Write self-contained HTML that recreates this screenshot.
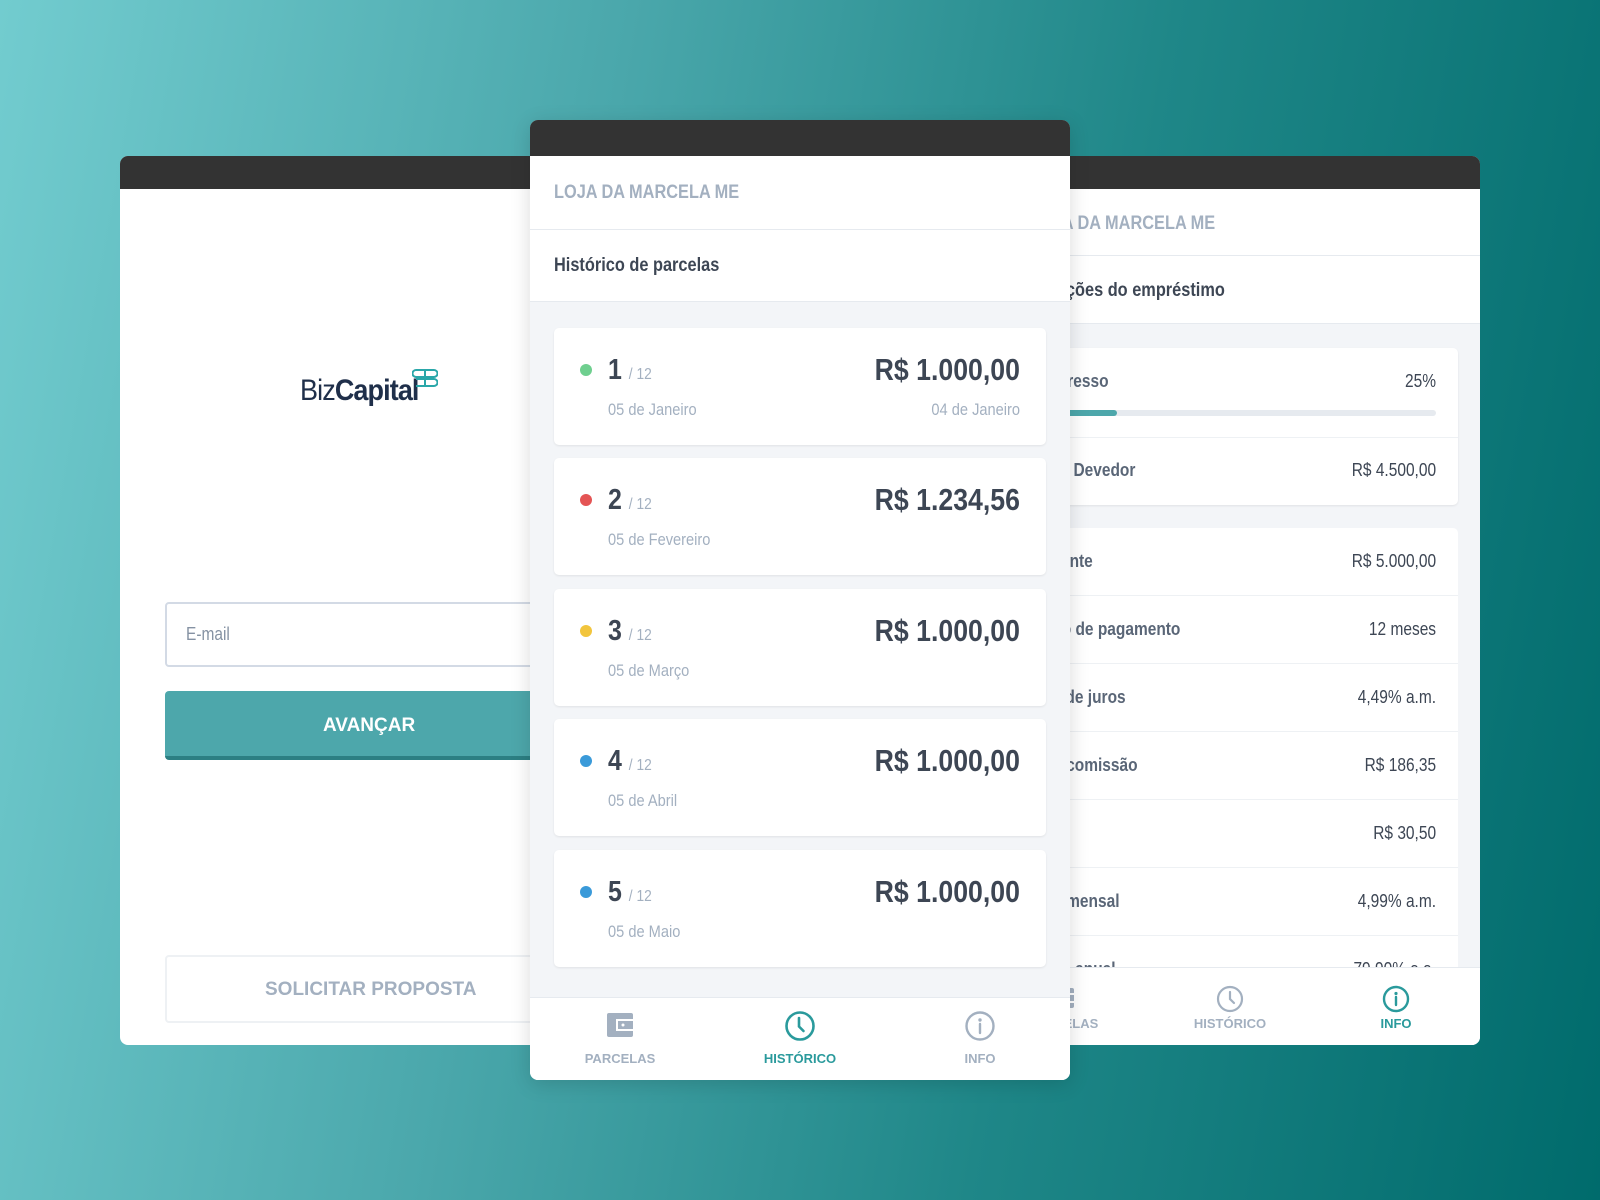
<!DOCTYPE html>
<html><head><meta charset="utf-8"><style>
*{box-sizing:border-box;margin:0;padding:0}
body{width:1600px;height:1200px;overflow:hidden;position:relative;font-family:"Liberation Sans",sans-serif;background:linear-gradient(100deg,#72cccf 0%,#4aa7ab 35%,#1f8788 65%,#006b6c 100%)}
.panel{position:absolute;background:#fff;border-radius:8px;overflow:hidden}
.bar{position:absolute;left:0;right:0;top:0;background:#333}
.n{display:inline-block;transform:scaleX(.86);transform-origin:left center;white-space:nowrap}
.nr{display:inline-block;transform:scaleX(.86);transform-origin:right center;white-space:nowrap}
.card{position:absolute;left:24px;width:492px;height:117px;background:#fff;border-radius:5px;box-shadow:0 1px 2px rgba(0,0,0,.08)}
.dot{position:absolute;left:26px;top:36px;width:12px;height:12px;border-radius:50%}
.num{position:absolute;left:54px;top:26px;font-size:29px;font-weight:bold;color:#3d4654}
.num small{font-size:16px;font-weight:normal;color:#a3b0c0}
.date{position:absolute;left:54px;top:72px;font-size:17px;color:#a3b0c0}
.amt{position:absolute;right:26px;top:24px;font-size:31px;font-weight:bold;color:#3d4654}
.d2{position:absolute;right:26px;top:72px;font-size:17px;color:#a3b0c0}
.row{position:absolute;left:0;right:0;height:68px;border-bottom:1px solid #eef1f4}
.row .l{position:absolute;left:22px;top:23px;font-size:18px;font-weight:bold;color:#5a6677}
.row .r{position:absolute;right:22px;top:23px;font-size:18px;color:#3d4654}
.lab{position:absolute;font-size:13px;font-weight:bold;text-align:center;width:120px}
</style></head><body>

<!-- left panel -->
<div class="panel" style="left:120px;top:156px;width:430px;height:889px">
  <div class="bar" style="height:33px"></div>
  <div style="position:absolute;left:180px;top:218px;font-size:30px;color:#1f2f4a;letter-spacing:-1px"><span class="n" style="transform:scaleX(.9)">Biz<b>Capital</b></span></div>
  <svg style="position:absolute;left:292px;top:212px" width="26" height="20" viewBox="0 0 26 20"><path d="M4 2h18a3.5 3.5 0 0 1 0 7H4a3.5 3.5 0 0 1 0-7zM4 11h18a3.5 3.5 0 0 1 0 7H4" fill="none" stroke="#2aa7a9" stroke-width="2" stroke-linejoin="round"/><path d="M13 2v16" stroke="#2aa7a9" stroke-width="2"/></svg>
  <div style="position:absolute;left:45px;top:446px;width:420px;height:65px;border:2px solid #d3dae5;border-radius:4px"></div>
  <div style="position:absolute;left:66px;top:468px;font-size:18px;color:#8592a3"><span class="n">E-mail</span></div>
  <div style="position:absolute;left:45px;top:535px;width:420px;height:69px;background:#4da7ab;border-bottom:4px solid #2c7f83;border-radius:4px"></div>
  <div style="position:absolute;left:203px;top:559px;font-size:19px;font-weight:bold;color:#fff">AVANÇAR</div>
  <div style="position:absolute;left:45px;top:799px;width:420px;height:68px;border:2px solid #eef1f4;border-radius:4px"></div>
  <div style="position:absolute;left:145px;top:823px;font-size:19px;font-weight:bold;color:#a3b0c0">SOLICITAR PROPOSTA</div>
</div>

<!-- right panel -->
<div class="panel" style="left:1010px;top:156px;width:470px;height:889px;background:#f3f5f8">
  <div class="bar" style="height:33px"></div>
  <div style="position:absolute;left:0;right:0;top:33px;height:135px;background:#fff"></div>
  <div style="position:absolute;left:0;right:0;top:99px;height:1px;background:#e6eaef"></div>
  <div style="position:absolute;left:0;right:0;top:167px;height:1px;background:#e6eaef"></div>
  <div style="position:absolute;left:20px;top:57px;font-size:19px;font-weight:bold;color:#a3b0c0"><span class="n">LOJA DA MARCELA ME</span></div>
  <div style="position:absolute;left:-4px;top:124px;font-size:19px;font-weight:bold;color:#3d4654"><span class="n">Informações do empréstimo</span></div>
  <div style="position:absolute;left:22px;right:22px;top:192px;height:157px;background:#fff;border-radius:5px;box-shadow:0 1px 2px rgba(0,0,0,.08)">
    <div style="position:absolute;left:0px;top:23px;font-size:18px;font-weight:bold;color:#5a6677"><span class="n">Progresso</span></div>
    <div style="position:absolute;right:22px;top:23px;font-size:18px;color:#3d4654"><span class="nr">25%</span></div>
    <div style="position:absolute;left:0;right:22px;top:62px;height:6px;background:#e6eaef;border-radius:3px"><div style="width:85px;height:6px;background:#4da7ab;border-radius:3px"></div></div>
    <div style="position:absolute;left:0;right:0;top:89px;height:1px;background:#eef1f4"></div>
    <div style="position:absolute;left:-5px;top:112px;font-size:18px;font-weight:bold;color:#5a6677"><span class="n">Saldo Devedor</span></div>
    <div style="position:absolute;right:22px;top:112px;font-size:18px;color:#3d4654"><span class="nr">R$ 4.500,00</span></div>
  </div>
  <div style="position:absolute;left:22px;right:22px;top:372px;height:480px;background:#fff;border-radius:5px">
    <div class="row" style="top:0"><div class="l" style="left:-8px"><span class="n">Montante</span></div><div class="r"><span class="nr">R$ 5.000,00</span></div></div>
    <div class="row" style="top:68px"><div class="l" style="left:-3px"><span class="n">Prazo de pagamento</span></div><div class="r"><span class="nr">12 meses</span></div></div>
    <div class="row" style="top:136px"><div class="l" style="left:-5px"><span class="n">Taxa de juros</span></div><div class="r"><span class="nr">4,49% a.m.</span></div></div>
    <div class="row" style="top:204px"><div class="l" style="left:-8px"><span class="n">Valor comissão</span></div><div class="r"><span class="nr">R$ 186,35</span></div></div>
    <div class="row" style="top:272px"><div class="l" style="left:0"><span class="n">IOF</span></div><div class="r"><span class="nr">R$ 30,50</span></div></div>
    <div class="row" style="top:340px"><div class="l" style="left:-14px"><span class="n">Custo mensal</span></div><div class="r"><span class="nr">4,99% a.m.</span></div></div>
    <div class="row" style="top:408px"><div class="l" style="left:-5px"><span class="n">Custo anual</span></div><div class="r"><span class="nr">79,90% a.a.</span></div></div>
  </div>
  <div style="position:absolute;left:0;right:0;top:811px;height:78px;background:#fff;border-top:1px solid #e6eaef">
    <svg style="position:absolute;left:40px;top:17px" width="26" height="26" viewBox="0 0 26 26"><rect x="2" y="3" width="22" height="20" rx="2" fill="#a3b0c0"/><rect x="10" y="8" width="14" height="10" fill="#fff"/><rect x="12" y="10" width="12" height="6" fill="#a3b0c0"/></svg>
    <div class="lab" style="left:-7px;top:48px;color:#a3b0c0">PARCELAS</div>
    <svg style="position:absolute;left:206px;top:17px" width="28" height="28" viewBox="0 0 28 28"><circle cx="14" cy="14" r="12" fill="none" stroke="#a3b0c0" stroke-width="2.2"/><path d="M14 7v7l4 4" fill="none" stroke="#a3b0c0" stroke-width="2.2" stroke-linecap="round"/></svg>
    <div class="lab" style="left:160px;top:48px;color:#a3b0c0">HISTÓRICO</div>
    <svg style="position:absolute;left:372px;top:17px" width="28" height="28" viewBox="0 0 28 28"><circle cx="14" cy="14" r="12" fill="none" stroke="#2a9a9c" stroke-width="2.4"/><circle cx="14" cy="8.5" r="1.6" fill="#2a9a9c"/><path d="M14 12v8" stroke="#2a9a9c" stroke-width="2.4" stroke-linecap="round"/></svg>
    <div class="lab" style="left:326px;top:48px;color:#2a9a9c">INFO</div>
  </div>
</div>

<!-- middle panel -->
<div class="panel" style="left:530px;top:120px;width:540px;height:960px;background:#f3f5f8;box-shadow:0 4px 20px rgba(0,0,0,.15)">
  <div class="bar" style="height:36px"></div>
  <div style="position:absolute;left:0;right:0;top:36px;height:146px;background:#fff"></div>
  <div style="position:absolute;left:0;right:0;top:109px;height:1px;background:#e6eaef"></div>
  <div style="position:absolute;left:0;right:0;top:181px;height:1px;background:#e6eaef"></div>
  <div style="position:absolute;left:24px;top:62px;font-size:19px;font-weight:bold;color:#a3b0c0"><span class="n">LOJA DA MARCELA ME</span></div>
  <div style="position:absolute;left:24px;top:135px;font-size:19px;font-weight:bold;color:#3d4654"><span class="n">Histórico de parcelas</span></div>

  <div class="card" style="top:208px"><div class="dot" style="background:#6fcf8f"></div><div class="num"><span class="n">1 <small>/ 12</small></span></div><div class="date"><span class="n">05 de Janeiro</span></div><div class="amt"><span class="nr">R$ 1.000,00</span></div><div class="d2"><span class="nr">04 de Janeiro</span></div></div>
  <div class="card" style="top:338px"><div class="dot" style="background:#e45454"></div><div class="num"><span class="n">2 <small>/ 12</small></span></div><div class="date"><span class="n">05 de Fevereiro</span></div><div class="amt"><span class="nr">R$ 1.234,56</span></div></div>
  <div class="card" style="top:469px"><div class="dot" style="background:#f2c53d"></div><div class="num"><span class="n">3 <small>/ 12</small></span></div><div class="date"><span class="n">05 de Março</span></div><div class="amt"><span class="nr">R$ 1.000,00</span></div></div>
  <div class="card" style="top:599px"><div class="dot" style="background:#3a9ad9"></div><div class="num"><span class="n">4 <small>/ 12</small></span></div><div class="date"><span class="n">05 de Abril</span></div><div class="amt"><span class="nr">R$ 1.000,00</span></div></div>
  <div class="card" style="top:730px"><div class="dot" style="background:#3a9ad9"></div><div class="num"><span class="n">5 <small>/ 12</small></span></div><div class="date"><span class="n">05 de Maio</span></div><div class="amt"><span class="nr">R$ 1.000,00</span></div></div>

  <div style="position:absolute;left:0;right:0;top:877px;height:83px;background:#fff;border-top:1px solid #e6eaef">
    <svg style="position:absolute;left:75px;top:13px" width="30" height="28" viewBox="0 0 30 28"><rect x="2" y="2" width="26" height="24" rx="2" fill="#a3b0c0"/><rect x="11" y="8" width="17" height="12" fill="#fff"/><rect x="13" y="10" width="15" height="8" fill="#a3b0c0"/><circle cx="18" cy="14" r="1.5" fill="#fff"/></svg>
    <div class="lab" style="left:30px;top:53px;color:#a3b0c0">PARCELAS</div>
    <svg style="position:absolute;left:254px;top:12px" width="32" height="32" viewBox="0 0 32 32"><circle cx="16" cy="16" r="13.5" fill="none" stroke="#2a9a9c" stroke-width="2.6"/><path d="M15 8v8.5l4.5 4.5" fill="none" stroke="#2a9a9c" stroke-width="2.6" stroke-linecap="round"/></svg>
    <div class="lab" style="left:210px;top:53px;color:#2a9a9c">HISTÓRICO</div>
    <svg style="position:absolute;left:434px;top:12px" width="32" height="32" viewBox="0 0 32 32"><circle cx="16" cy="16" r="13.5" fill="none" stroke="#a3b0c0" stroke-width="2.4"/><circle cx="16" cy="10" r="1.7" fill="#a3b0c0"/><path d="M16 14v9" stroke="#a3b0c0" stroke-width="2.4" stroke-linecap="round"/></svg>
    <div class="lab" style="left:390px;top:53px;color:#a3b0c0">INFO</div>
  </div>
</div>
</body></html>
